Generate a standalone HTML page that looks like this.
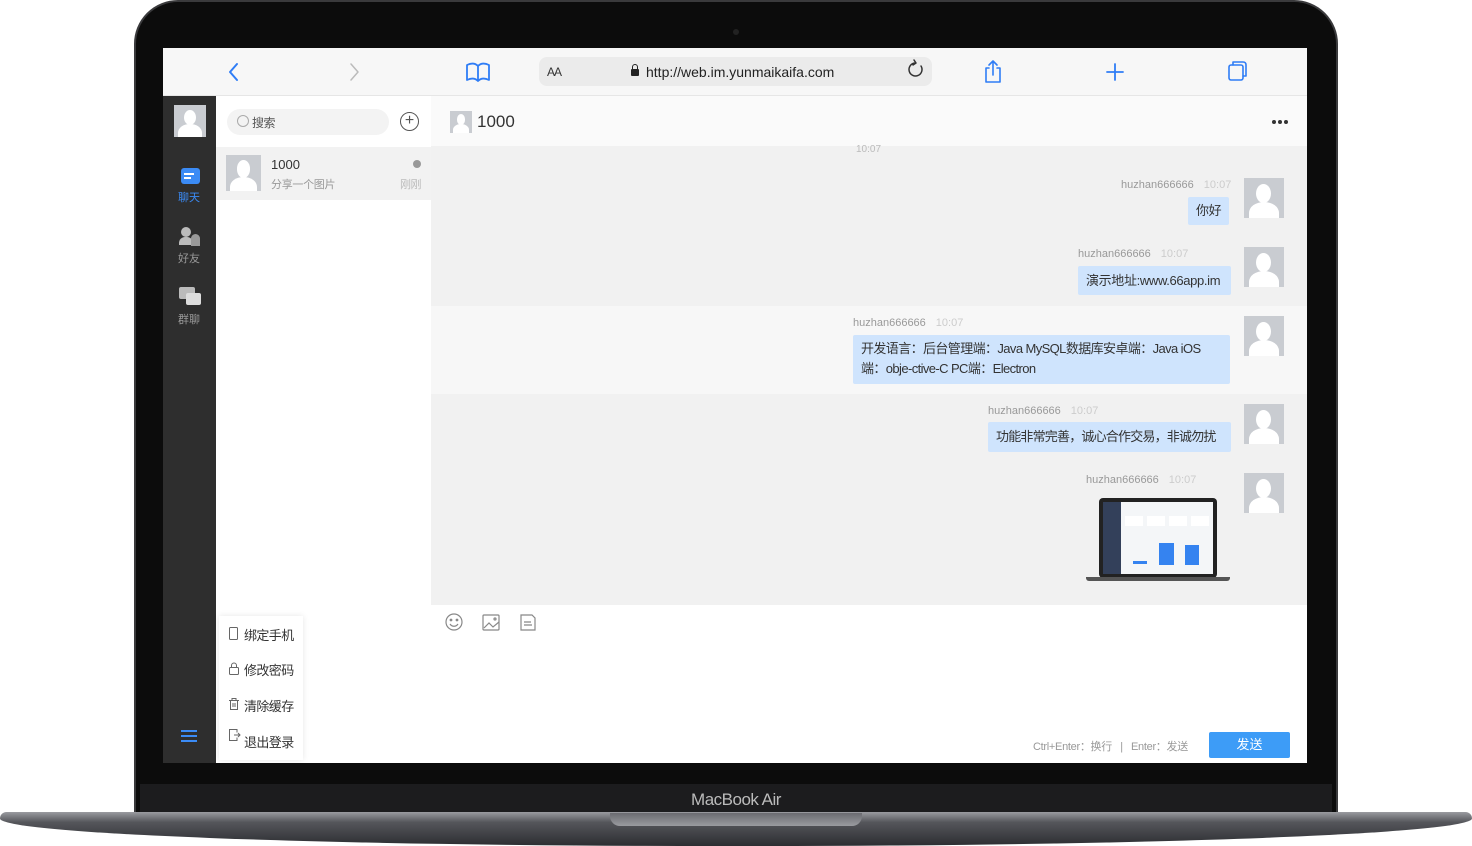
<!DOCTYPE html>
<html><head><meta charset="utf-8"><style>
*{margin:0;padding:0;box-sizing:border-box}
body{width:1472px;height:846px;background:#fff;position:relative;overflow:hidden;font-family:"Liberation Sans","Noto Sans CJK SC",sans-serif}
.a{position:absolute}
.cn{font-family:"Liberation Sans","Noto Sans CJK SC",sans-serif}
.av{position:absolute;width:40px;height:40px;background:#c9ccd1;overflow:hidden}
.av:before{content:"";position:absolute;left:30%;top:15%;width:38%;height:48%;border-radius:50%;background:#fff}
.av:after{content:"";position:absolute;left:12%;top:60%;width:76%;height:55%;border-radius:50% 50% 0 0;background:#fff}
.nm{position:absolute;font-size:11px;color:#999;white-space:nowrap}
.nm span{color:#ccc;margin-left:10px}
.bb{position:absolute;background:#cfe4fd;color:#333;font-size:13px;padding:0 8px;line-height:20px;border-radius:2px;letter-spacing:-0.35px;white-space:nowrap}
.mi{position:absolute;font-size:13px;color:#333}
</style></head><body>
<div class="a" style="left:134px;top:0;width:1204px;height:830px;background:#0c0c0c;border-radius:44px 44px 0 0;border:2px solid #3a3a3c"></div>
<div class="a" style="left:140px;top:784px;width:1192px;height:32px;background:#1c1c1e"></div>
<div class="a" style="left:0;width:1472px;top:812px;height:34px;background:linear-gradient(#9a9ba0,#55565b 30%,#2c2d31);border-radius:8px 8px 60% 60%/8px 8px 34px 34px"></div>
<div class="a" style="left:610px;top:813px;width:252px;height:13px;background:linear-gradient(#6a6b70,#9a9ba0);border-radius:0 0 10px 10px"></div>
<div class="a" style="left:0;width:1472px;top:790px;text-align:center;color:#bbb;font-size:17px;letter-spacing:-0.5px">MacBook Air</div>
<div class="a" style="left:733px;top:29px;width:6px;height:6px;border-radius:50%;background:#222"></div>
<div class="a" style="left:163px;top:48px;width:1144px;height:715px;background:#f1f1f1;overflow:hidden">
 <div class="a" style="left:0;top:0;width:1144px;height:48px;background:#f7f7f7;border-bottom:1px solid #e6e6e6"></div>
 <svg class="a" style="left:0;top:0" width="1144" height="48" fill="none" stroke-linecap="round" stroke-linejoin="round">
  <path d="M74 16l-7 8 7 8" stroke="#2f7df6" stroke-width="2"/>
  <path d="M188 16l7 8-7 8" stroke="#bbb" stroke-width="1.5"/>
  <path d="M304 17c4-2 8-2 11 1v15c-3-3-7-3-11-1zM315 18c3-3 7-3 11-1v15c-4-2-8-2-11 1" stroke="#2f7df6" stroke-width="1.8"/>
  <rect x="376" y="9" width="393" height="29" rx="8" fill="#ebebeb" stroke="none"/>
  <path d="M758 18a6.5 6.5 0 1 1-6-3M751 12l2 3-3 2" stroke="#333" stroke-width="1.5"/>
  <path d="M826 20h-3v14h14V20h-3M830 27V13M826 17l4-4 4 4" stroke="#2f7df6" stroke-width="1.6"/>
  <path d="M952 16v16M944 24h16" stroke="#2f7df6" stroke-width="1.8"/>
  <rect x="1066" y="17" width="14" height="15" rx="2" stroke="#2f7df6" stroke-width="1.6"/>
  <path d="M1070 17v-3h10c2 0 3 1 3 3v11h-3" stroke="#2f7df6" stroke-width="1.6"/>
 </svg>
 <div class="a" style="left:384px;top:17px;font-size:12px;color:#333;letter-spacing:-1px">AA</div>
 <div class="a" style="left:468px;top:21px;width:8px;height:7px;background:#222;border-radius:1px"></div>
 <div class="a" style="left:469px;top:16px;width:6px;height:7px;border:1.5px solid #222;border-radius:3px 3px 0 0"></div>
 <div class="a" style="left:483px;top:16px;font-size:14px;color:#222">http://web.im.yunmaikaifa.com</div>
 <div class="a" style="left:0;top:48px;width:53px;height:667px;background:#2e2e2e"></div>
 <div class="av" style="left:11px;top:57px;width:32px;height:32px"></div>
 <div class="a" style="left:18px;top:120px;width:19px;height:16px;background:#3b8bf5;border-radius:3px"></div>
 <div class="a" style="left:21px;top:125px;width:10px;height:2px;background:#fff"></div>
 <div class="a" style="left:21px;top:129px;width:7px;height:2px;background:#fff"></div>
 <div class="a cn" style="left:15px;top:141px;font-size:11px;color:#3b8bf5">聊天</div>
 <div class="a" style="left:18px;top:179px;width:12px;height:18px;"><div style="width:10px;height:10px;border-radius:50%;background:#bbb"></div><div style="width:14px;height:8px;border-radius:6px 6px 0 0;background:#bbb;margin-left:-2px"></div></div>
 <div class="a" style="left:28px;top:186px;width:9px;height:12px;border-radius:5px 5px 0 0;background:#999"></div>
 <div class="a cn" style="left:15px;top:202px;font-size:11px;color:#999">好友</div>
 <div class="a" style="left:16px;top:239px;width:16px;height:12px;background:#bbb;border-radius:2px"></div>
 <div class="a" style="left:23px;top:245px;width:15px;height:12px;background:#ddd;border-radius:2px"></div>
 <div class="a cn" style="left:15px;top:263px;font-size:11px;color:#999">群聊</div>
 <div class="a" style="left:18px;top:682px;width:16px;height:2px;background:#3b8bf5;box-shadow:0 5px #3b8bf5,0 10px #3b8bf5"></div>
 <div class="a" style="left:53px;top:48px;width:215px;height:667px;background:#fff"></div>
 <div class="a" style="left:64px;top:61px;width:162px;height:26px;border-radius:13px;background:#f3f3f3"></div>
 <div class="a" style="left:74px;top:67px;width:12px;height:12px;border:1px solid #aaa;border-radius:50%"></div>
 <div class="a cn" style="left:89px;top:66px;font-size:12px;color:#555;letter-spacing:-0.5px">搜索</div>
 <div class="a" style="left:237px;top:64px;width:19px;height:19px;border:1.5px solid #555;border-radius:50%;text-align:center;line-height:15px;font-size:16px;color:#555">+</div>
 <div class="a" style="left:53px;top:99px;width:215px;height:53px;background:#f2f2f2"></div>
 <div class="av" style="left:63px;top:107px;width:35px;height:36px"></div>
 <div class="a" style="left:108px;top:109px;font-size:13px;color:#333">1000</div>
 <div class="a cn" style="left:108px;top:128px;font-size:11px;color:#999;letter-spacing:-0.3px">分享一个图片</div>
 <div class="a" style="left:250px;top:112px;width:8px;height:8px;border-radius:50%;background:#999"></div>
 <div class="a cn" style="left:237px;top:128px;font-size:11px;color:#bbb;letter-spacing:-0.5px">刚刚</div>
 <div class="a" style="left:56px;top:568px;width:84px;height:144px;background:#fff;box-shadow:0 0 6px rgba(0,0,0,.1)"></div>
 <svg class="a" style="left:64px;top:578px" width="14" height="130" fill="none" stroke="#666" stroke-width="1">
  <rect x="2.5" y="1.5" width="8" height="12" rx="1"/>
  <rect x="2.5" y="41.5" width="9" height="7" rx="1"/><path d="M4.5 41.5v-2a2.5 2.5 0 0 1 5 0v2"/>
  <path d="M2 74.5h10M5 74.5v-2h4v2M3.5 74.5v9h7v-9M6 77v4M8 77v4"/>
  <path d="M10 106.5v-3H2.5v11H10v-3M7 109h6M11 107l2 2-2 2"/>
 </svg>
 <div class="mi cn" style="left:81px;top:577px;letter-spacing:-0.6px">绑定手机</div>
 <div class="mi cn" style="left:81px;top:612px;letter-spacing:-0.6px">修改密码</div>
 <div class="mi cn" style="left:81px;top:648px;letter-spacing:-0.6px">清除缓存</div>
 <div class="mi cn" style="left:81px;top:684px;letter-spacing:-0.6px">退出登录</div>
 <div class="a" style="left:268px;top:48px;width:876px;height:50px;background:#fafafa"></div>
 <div class="av" style="left:287px;top:63px;width:22px;height:22px"></div>
 <div class="a" style="left:314px;top:64px;font-size:17px;color:#333">1000</div>
 <div class="a" style="left:1109px;top:72px;width:4px;height:4px;border-radius:50%;background:#333;box-shadow:6px 0 #333,12px 0 #333"></div>
 <div class="a" style="left:693px;top:96px;font-size:10px;color:#bbb">10:07</div>
 <div class="a" style="left:268px;top:258px;width:876px;height:88px;background:#f7f7f7"></div>
 <div class="nm" style="left:958px;top:131px">huzhan666666<span>10:07</span></div>
 <div class="av" style="left:1081px;top:130px"></div>
 <div class="bb cn" style="left:1025px;top:149px;height:28px;line-height:28px">你好</div>
 <div class="nm" style="left:915px;top:200px">huzhan666666<span>10:07</span></div>
 <div class="av" style="left:1081px;top:199px"></div>
 <div class="bb cn" style="left:915px;top:218px;width:153px;height:29px;line-height:29px">演示地址:www.66app.im</div>
 <div class="nm" style="left:690px;top:269px">huzhan666666<span>10:07</span></div>
 <div class="av" style="left:1081px;top:268px"></div>
 <div class="bb cn" style="left:690px;top:287px;width:377px;height:49px;padding-top:4px;white-space:normal;letter-spacing:-0.6px">开发语言：后台管理端：Java MySQL数据库安卓端：Java iOS端：obje-ctive-C PC端：Electron</div>
 <div class="nm" style="left:825px;top:357px">huzhan666666<span>10:07</span></div>
 <div class="av" style="left:1081px;top:356px"></div>
 <div class="bb cn" style="left:825px;top:374px;width:243px;height:30px;line-height:30px;letter-spacing:-0.8px">功能非常完善，诚心合作交易，非诚勿扰</div>
 <div class="nm" style="left:923px;top:426px">huzhan666666<span>10:07</span></div>
 <div class="av" style="left:1081px;top:425px"></div>
 <div class="a" style="left:936px;top:450px;width:118px;height:80px;background:#222;border-radius:4px"></div>
 <div class="a" style="left:940px;top:454px;width:110px;height:72px;background:#f4f6f8"></div>
 <div class="a" style="left:940px;top:454px;width:18px;height:72px;background:#33405a"></div>
 <div class="a" style="left:962px;top:468px;width:84px;height:10px;background:repeating-linear-gradient(90deg,#fff 0 18px,#f4f6f8 18px 22px)"></div>
 <div class="a" style="left:996px;top:495px;width:15px;height:22px;background:#3583f0"></div>
 <div class="a" style="left:1022px;top:497px;width:14px;height:20px;background:#3583f0"></div>
 <div class="a" style="left:970px;top:513px;width:14px;height:3px;background:#3583f0"></div>
 <div class="a" style="left:923px;top:529px;width:144px;height:4px;background:#555;border-radius:0 0 3px 3px"></div>
 <div class="a" style="left:268px;top:557px;width:876px;height:158px;background:#fff"></div>
 <svg class="a" style="left:280px;top:564px" width="100" height="22" fill="none" stroke="#888" stroke-width="1.2">
  <circle cx="11" cy="10" r="8"/><circle cx="8" cy="8" r=".8" fill="#888"/><circle cx="14" cy="8" r=".8" fill="#888"/><path d="M7 12c2 3 6 3 8 0"/>
  <rect x="40" y="3" width="16" height="15" rx="1"/><path d="M41 16l5-5 4 4 6-5"/><circle cx="52" cy="7" r="1"/>
  <path d="M78 3h11l3 3v12H78z M81 10h7M81 13h8"/>
 </svg>
 <div class="a cn" style="left:870px;top:690px;font-size:11px;color:#999;white-space:nowrap;letter-spacing:-0.3px">Ctrl+Enter：换行 &nbsp;&nbsp;| &nbsp;&nbsp;Enter：发送</div>
 <div class="a cn" style="left:1046px;top:684px;width:81px;height:26px;background:#3d9cf7;color:#fff;font-size:13px;text-align:center;line-height:26px;border-radius:2px">发送</div>
</div>
</body></html>
